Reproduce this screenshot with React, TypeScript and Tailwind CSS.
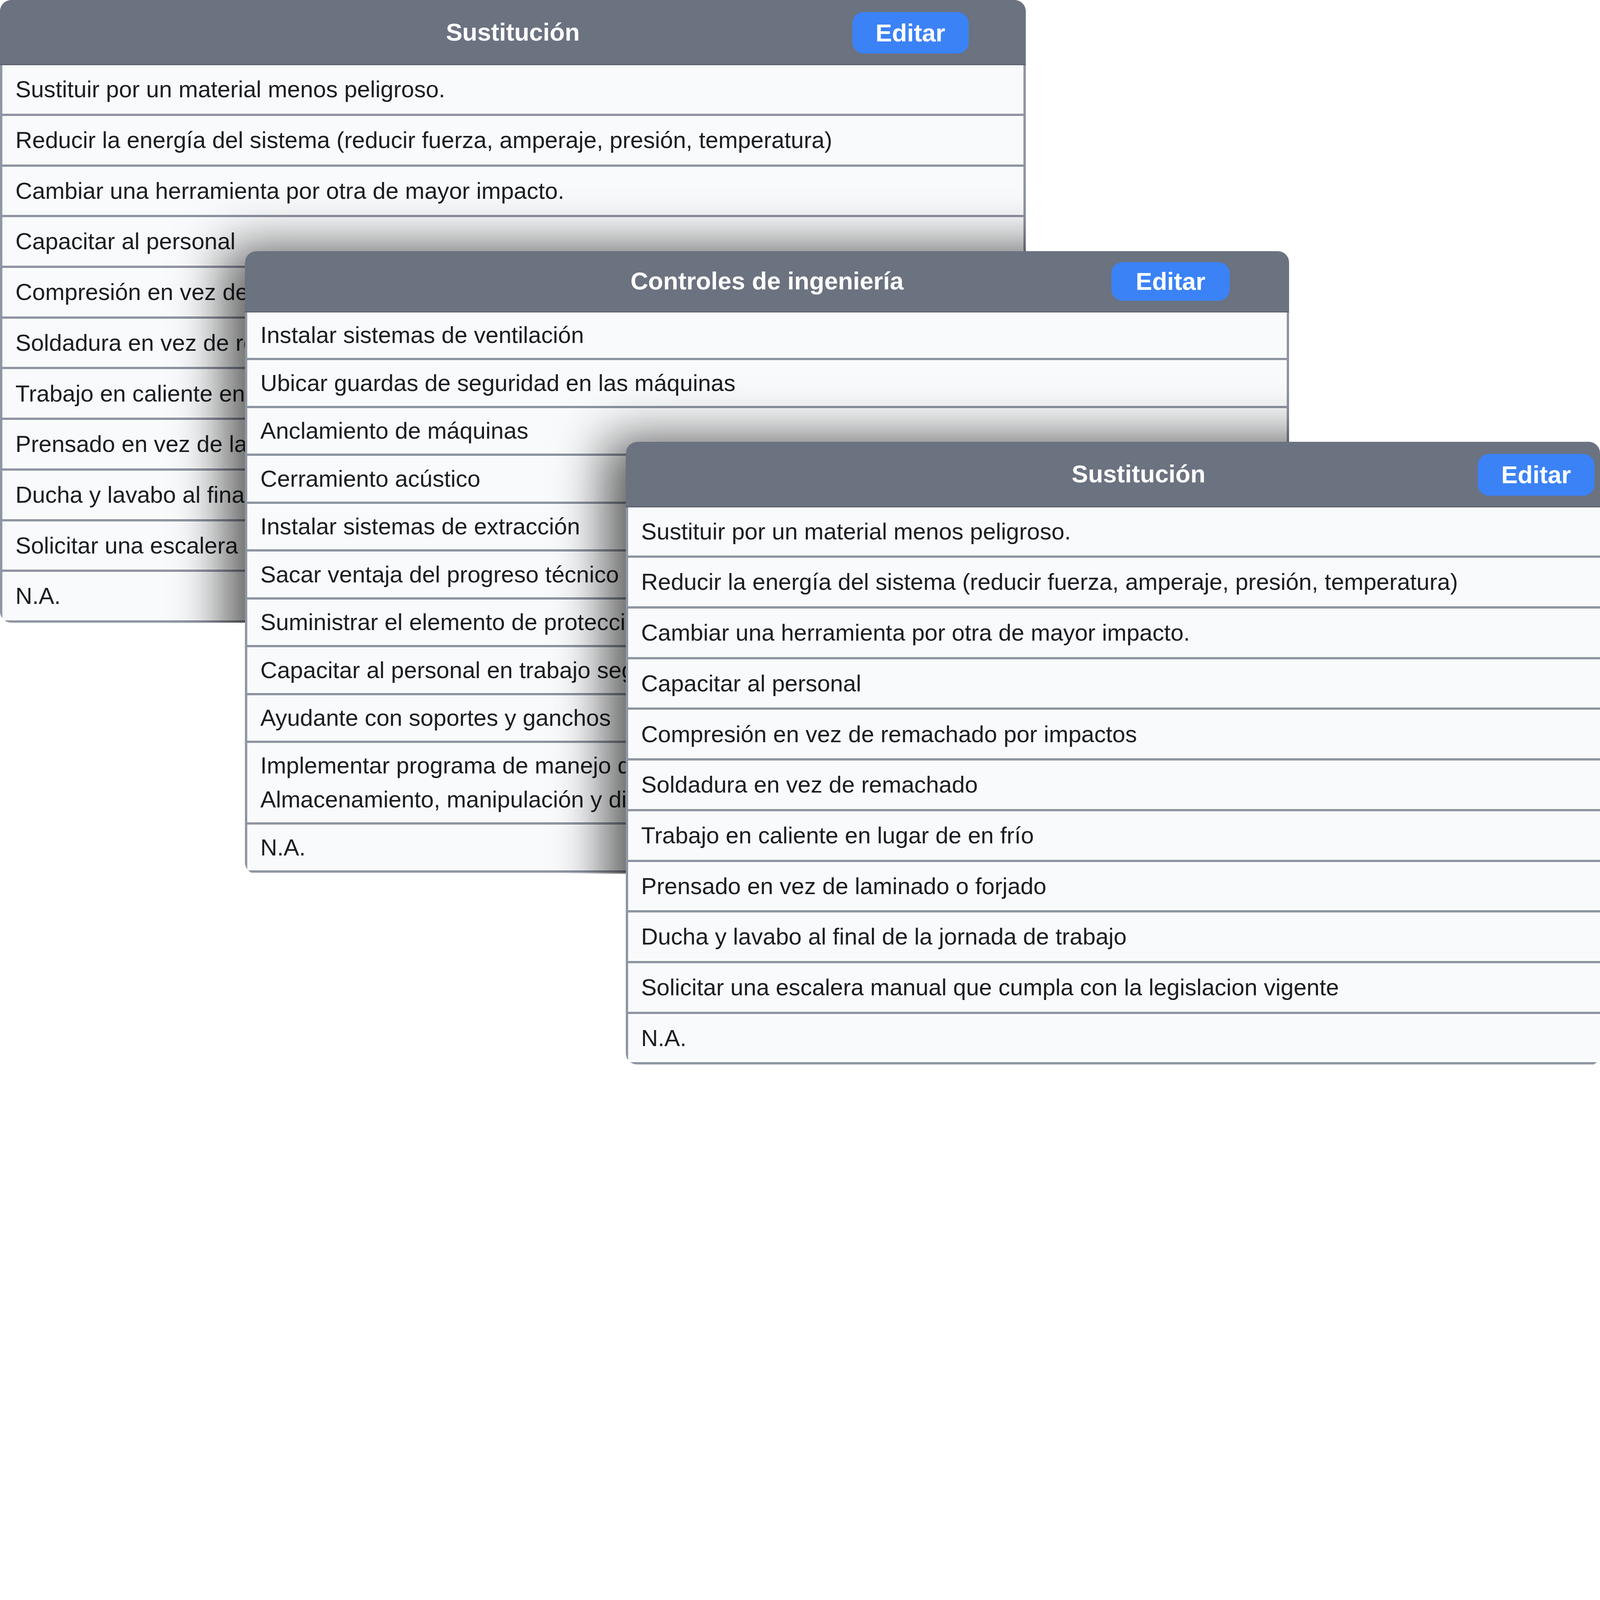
import type { ReactNode } from "react"

// Todas las medidas en vw: el lienzo de referencia mide 100vw x 66.6vw

const sustitucion = [
  "Sustituir por un material menos peligroso.",
  "Reducir la energía del sistema (reducir fuerza, amperaje, presión, temperatura)",
  "Cambiar una herramienta por otra de mayor impacto.",
  "Capacitar al personal",
  "Compresión en vez de remachado por impactos",
  "Soldadura en vez de remachado",
  "Trabajo en caliente en lugar de en frío",
  "Prensado en vez de laminado o forjado",
  "Ducha y lavabo al final de la jornada de trabajo",
  "Solicitar una escalera manual que cumpla con la legislacion vigente",
  "N.A.",
]

const ingenieria: (string | string[])[] = [
  "Instalar sistemas de ventilación",
  "Ubicar guardas de seguridad en las máquinas",
  "Anclamiento de máquinas",
  "Cerramiento acústico",
  "Instalar sistemas de extracción",
  "Sacar ventaja del progreso técnico",
  "Suministrar el elemento de protección personal",
  "Capacitar al personal en trabajo seguro",
  "Ayudante con soportes y ganchos",
  ["Implementar programa de manejo de sustancias químicas", "Almacenamiento, manipulación y disposición"],
  "N.A.",
]

function Row({ className, children }: { className: string; children: ReactNode }) {
  return (
    <div
      className={`flex items-center border-b-[0.16vw] border-[#8f96a3] bg-[#f9fafb] pl-[0.816vw] text-[1.456vw] whitespace-nowrap text-[#1c1d20] shadow-[inset_0_0.064vw_0_#ffffff,inset_0_-0.064vw_0_#ffffff] ${className}`}
    >
      {children}
    </div>
  )
}

function Header({ title, big }: { title: string; big: boolean }) {
  return (
    <div
      className={`grid grid-cols-[1fr_auto_1fr] items-center border-b-[0.096vw] border-[#5d6471] bg-[#6b7280] ${big ? "h-[4.079vw]" : "h-[3.839vw]"}`}
    >
      <div />
      <div className="text-[1.536vw] leading-none font-bold whitespace-nowrap text-white">{title}</div>
      <button
        className={`flex items-center justify-center justify-self-end rounded-[0.704vw] bg-[#3b82f6] text-[1.536vw] leading-none font-bold text-white ${big ? "mt-[0.096vw] mr-[3.567vw] h-[2.607vw] w-[7.278vw]" : "mt-[0.032vw] mr-[3.711vw] h-[2.415vw] w-[7.39vw]"}`}
      >
        Editar
      </button>
    </div>
  )
}

function SustitucionPanel({ shadow }: { shadow?: boolean }) {
  return (
    <div className="relative h-[38.915vw] w-[64.107vw] overflow-hidden rounded-[0.704vw] bg-[#f9fafb]">
      <Header title="Sustitución" big />
      <div className="border-x-[0.16vw] border-[#8f96a3]">
        {sustitucion.map((item) => (
          <Row key={item} className="h-[3.167vw]">
            {item}
          </Row>
        ))}
      </div>
      {/* sombra del panel de ingeniería que queda encima */}
      {shadow && (
        <div className="absolute top-[15.691vw] left-[15.307vw] h-[38.915vw] w-[65.259vw] rounded-[0.704vw] shadow-[-1.2vw_-0.16vw_3.2vw_rgba(0,0,0,0.65)]" />
      )}
    </div>
  )
}

function IngenieriaPanel() {
  return (
    <div className="relative h-[38.915vw] w-[65.259vw] overflow-hidden rounded-[0.704vw] bg-[#f9fafb]">
      <Header title="Controles de ingeniería" big={false} />
      <div className="border-x-[0.16vw] border-[#8f96a3]">
        {ingenieria.map((item, i) =>
          Array.isArray(item) ? (
            <Row key={i} className="h-[5.102vw]">
              <div className="leading-[2.111vw]">
                {item.map((line) => (
                  <div key={line}>{line}</div>
                ))}
              </div>
            </Row>
          ) : (
            <Row key={i} className="h-[2.991vw]">
              {item}
            </Row>
          )
        )}
      </div>
      <div className="absolute top-[11.932vw] left-[23.8vw] h-[38.98vw] w-[60.893vw] rounded-[0.704vw] shadow-[-1.2vw_-0.16vw_3.2vw_rgba(0,0,0,0.65)]" />
    </div>
  )
}

export default function App() {
  return (
    <div className="relative h-[66.6vw] w-screen overflow-hidden bg-white font-['Liberation_Sans',Arial,sans-serif]">
      <div className="absolute top-0 left-0">
        <SustitucionPanel shadow />
      </div>
      <div className="absolute top-[15.691vw] left-[15.307vw]">
        <IngenieriaPanel />
      </div>
      <div className="absolute top-[27.623vw] left-[39.107vw] h-[38.98vw] w-[60.893vw] overflow-hidden rounded-[0.704vw]">
        <SustitucionPanel />
      </div>
    </div>
  )
}
